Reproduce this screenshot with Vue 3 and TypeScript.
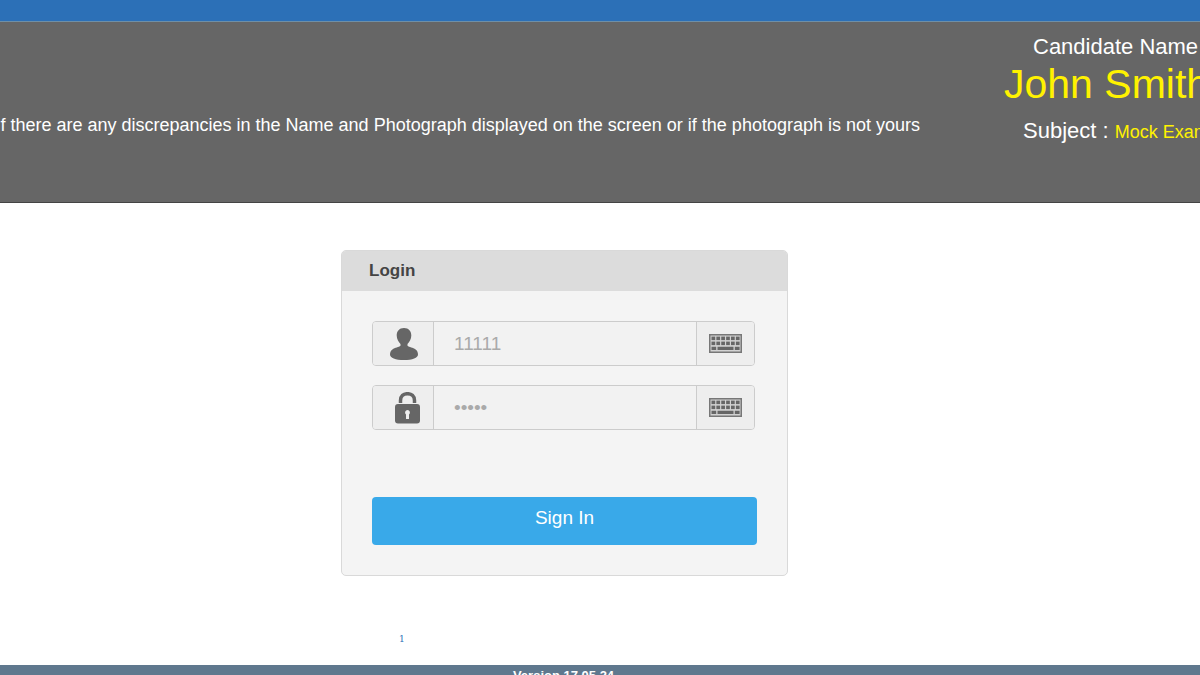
<script setup lang="ts">
import { ref } from 'vue'

const user = ref('11111')
const password = ref('11111')
const keyColumns = [0, 1, 2, 3, 4, 5]
</script>

<template>
  <div class="page">
    <div class="topbar"></div>
    <header class="banner">
      <p class="notice">
        If there are any discrepancies in the Name and Photograph displayed on the screen or if the photograph is not yours
      </p>
      <div class="candidate">
        <div class="label">Candidate Name</div>
        <div class="name">John Smith</div>
        <div class="subject">Subject : <span>Mock Exam</span></div>
      </div>
    </header>

    <main class="main">
      <form class="card" @submit.prevent>
        <h1 class="title">Login</h1>
        <div class="body">
          <div class="field">
            <label class="addon" for="user" aria-label="User name">
              <svg width="28" height="32" viewBox="0 0 28 32">
                <path d="M14 0C9.200 0 6.700 3.200 6.700 7.500C6.700 11 8.500 14.200 10.500 15.900V17.800C9 19.200 4.800 19.600 2.400 21.500C.6 22.900 0 24.700 0 26.500C0 30 5.500 32 14 32S28 30 28 26.500C28 24.700 27.400 22.900 25.600 21.500C23.200 19.600 19 19.200 17.500 17.800V15.900C19.500 14.200 21.300 11 21.300 7.500C21.300 3.200 18.800 0 14 0Z" />
              </svg>
            </label>
            <input id="user" v-model="user" type="text" autocomplete="off" />
            <button class="keys" type="button" aria-label="Keyboard">
              <svg width="33" height="19" viewBox="0 0 33 19">
                <rect class="frame" x="0.75" y="0.75" width="31.500" height="17.500" />
                <template v-for="c in keyColumns" :key="c">
                  <rect :x="2.500 + c * 4.880" y="2.600" width="3.700" height="3.500" />
                  <rect :x="2.500 + c * 4.880" y="7.600" width="3.700" height="3.500" />
                </template>
                <path d="M2.500 12.700h4.700v3.400H2.500zM8.500 12.700h16v3.400h-16zM25.800 12.700h4.800v3.400h-4.800z" />
              </svg>
            </button>
          </div>
          <div class="field">
            <label class="addon lock" for="password" aria-label="Password">
              <svg width="25" height="32" viewBox="0 0 25 32">
                <path class="shackle" d="M5.500 11V8.500C5.500 4 8.500 1.700 12.500 1.700S19.500 4 19.500 8.500V11" />
                <path fill-rule="evenodd" d="M3 12H22Q25 12 25 15V28.500Q25 31.500 22 31.500H3Q0 31.500 0 28.500V15Q0 12 3 12ZM12.500 18A2.600 2.600 0 0 0 11 22.600V27H14V22.600A2.600 2.600 0 0 0 12.500 18Z" />
              </svg>
            </label>
            <input id="password" v-model="password" type="password" autocomplete="off" />
            <button class="keys" type="button" aria-label="Keyboard">
              <svg width="33" height="19" viewBox="0 0 33 19">
                <rect class="frame" x="0.75" y="0.75" width="31.500" height="17.500" />
                <template v-for="c in keyColumns" :key="c">
                  <rect :x="2.500 + c * 4.880" y="2.600" width="3.700" height="3.500" />
                  <rect :x="2.500 + c * 4.880" y="7.600" width="3.700" height="3.500" />
                </template>
                <path d="M2.500 12.700h4.700v3.400H2.500zM8.500 12.700h16v3.400h-16zM25.800 12.700h4.800v3.400h-4.800z" />
              </svg>
            </button>
          </div>
          <button class="signin" type="submit">Sign In</button>
        </div>
      </form>
      <div class="page-number">1</div>
    </main>

    <footer class="footer">Version 17.05.24</footer>
  </div>
</template>

<style>
body {
  margin: 0;
}
</style>

<style scoped>
.page {
  display: flex;
  flex-direction: column;
  height: 100vh;
  overflow: hidden;
  background: #fff;
  font-family: "Liberation Sans", Arial, sans-serif;
}
.topbar {
  flex: none;
  height: 21px;
  background: #2c70b7;
}
.banner {
  display: flex;
  flex: none;
  align-items: flex-start;
  height: 180px;
  border-top: 1px solid #6f8fa6;
  border-bottom: 1px solid #444;
  background: #666;
  color: #fff;
  white-space: nowrap;
}
.notice {
  display: flex;
  flex: 1;
  justify-content: flex-end;
  min-width: 0;
  margin: 92px 0 0;
  font-size: 18px;
  line-height: 22px;
}
.candidate {
  flex: none;
  width: 196px;
  margin-left: 84px;
  padding-top: 13px;
  font-size: 22px;
  line-height: 24px;
}
.label {
  margin-left: 29px;
}
.name {
  color: #fff200;
  font-size: 41px;
  line-height: 50px;
}
.subject {
  margin: 10px 0 0 19px;
}
.subject span {
  color: #fff200;
  font-size: 18px;
}
.main {
  display: flex;
  flex: 1;
  flex-direction: column;
  align-items: center;
  padding: 47px 71px 0 0;
}
.card {
  box-sizing: border-box;
  width: 447px;
  border: 1px solid #d9d9d9;
  border-radius: 5px;
  background: #f4f4f4;
  overflow: hidden;
}
.title {
  margin: 0;
  padding-left: 27px;
  background: #dcdcdc;
  color: #444;
  font-size: 17px;
  line-height: 40px;
}
.body {
  padding: 30px;
}
.field {
  display: flex;
  box-sizing: border-box;
  height: 45px;
  margin: 0 2px 19px 0;
  border: 1px solid #ccc;
  border-radius: 4px;
  background: #f2f2f2;
  overflow: hidden;
}
.addon,
.keys {
  display: flex;
  flex: none;
  box-sizing: border-box;
  align-items: center;
  justify-content: center;
  width: 61px;
  background: #eee;
  fill: #666;
}
.addon {
  border-right: 1px solid #ccc;
}
.addon svg {
  margin-left: 2px;
}
.lock svg {
  margin-left: 8px;
}
.shackle {
  fill: none;
  stroke: #666;
  stroke-width: 3.5;
}
.keys {
  width: 58px;
  padding: 0;
  border: 0;
  border-left: 1px solid #ccc;
}
.frame {
  fill: #d2d2d2;
  stroke: #777;
  stroke-width: 1.5;
}
input {
  flex: 1;
  min-width: 0;
  padding: 0 20px;
  border: 0;
  background: transparent;
  color: #aaa;
  font: 19px "Liberation Sans", Arial, sans-serif;
}
.signin {
  display: block;
  width: 100%;
  height: 48px;
  margin-top: 67px;
  padding: 0 0 6px;
  border: 0;
  border-radius: 4px;
  background: #39a9e9;
  color: #fff;
  font: 19px "Liberation Sans", Arial, sans-serif;
}
.page-number {
  align-self: flex-start;
  margin: 57px 0 0 399px;
  color: #2c70b7;
  font: 9px/12px "DejaVu Serif", serif;
}
.footer {
  flex: none;
  height: 10px;
  padding-right: 73px;
  background: #5f788e;
  color: #fff;
  font-size: 13px;
  font-weight: bold;
  line-height: 22px;
  text-align: center;
}
</style>
